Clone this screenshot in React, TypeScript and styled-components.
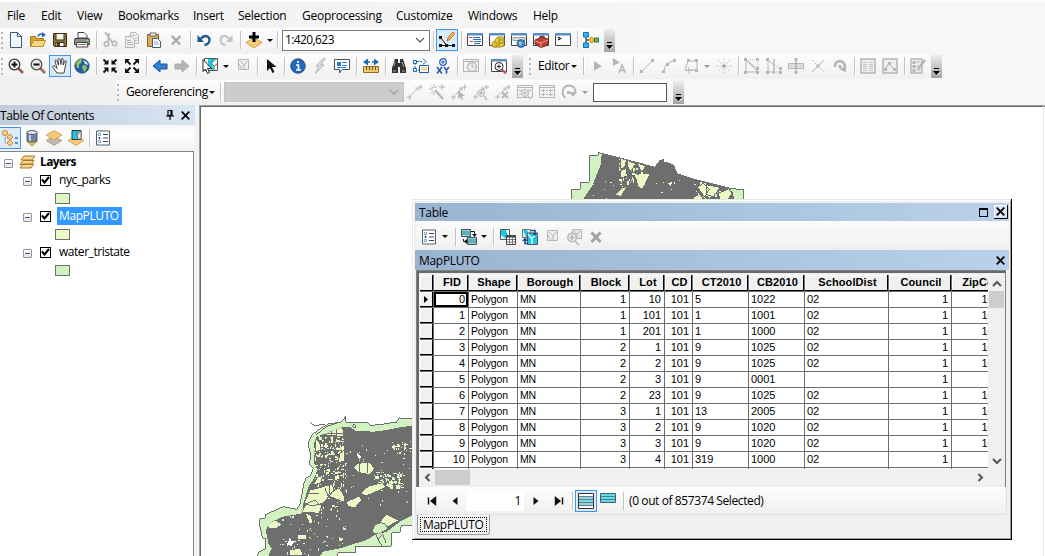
import React from 'react';
import styled, { createGlobalStyle } from 'styled-components';

const Global = createGlobalStyle`
  *{box-sizing:border-box}
  body{margin:0;background:#f0f0f0;overflow:hidden;color:#000;font:12px/16px "Open Sans","Noto Sans",sans-serif;letter-spacing:-.25px}
  svg{display:block;flex:none}
`;

const OFF = '#b6b6b6';
const DARK = '#3c4350';
const BLUE = '#2463b4';

const Screen = styled.div`width:1045px;height:556px;display:flex;flex-direction:column;background:linear-gradient(90deg,#f0f0f0,#f7f7f7 65%);overflow:hidden`;
const MenuBar = styled.nav`height:27px;border-top:2px solid #fff;display:flex;align-items:center;padding:2px 0 0 7px;flex:none`;
const MenuItem = styled.span<{ $w: number }>`width:${p => p.$w}px;white-space:nowrap;flex:none`;
const ToolRow = styled.div<{ $left?: number }>`height:26px;display:flex;align-items:center;flex:none;padding-left:${p => p.$left || 0}px`;
const Strip = styled.div`height:25px;display:flex;align-items:center;background:linear-gradient(#fdfdfd,#f0f0f0)`;
const Slot = styled.span<{ $w?: number; $on?: boolean }>`
  width:${p => p.$w || 22}px;height:22px;display:flex;align-items:center;justify-content:center;flex:none;
  ${p => p.$on && 'border:1px solid #3c96f0;background:#dcebfa;'}
`;
const Sep = styled.i<{ $w?: number }>`
  width:${p => p.$w || 6}px;height:18px;flex:none;display:flex;justify-content:center;
  &::after{content:'';width:1px;background:#c3c3c3;box-shadow:1px 0 #fff}
`;
const Grip = styled.i`width:5px;height:17px;flex:none;background:repeating-linear-gradient(#b8b8b8 0 2px,transparent 2px 5px) 1px 0/2px 100% no-repeat`;
const Space = styled.i<{ $w: number }>`width:${p => p.$w}px;flex:none`;
const Caret = styled.i<{ $w?: number; $off?: boolean }>`
  width:${p => p.$w || 9}px;flex:none;display:flex;justify-content:center;
  &::after{content:'';border:3px solid transparent;border-top-color:${p => (p.$off ? '#999' : '#111')};border-bottom:0}
`;
const More = styled.span`width:11px;height:23px;margin-left:2px;flex:none;background:linear-gradient(#eee,#a2a2a2);display:flex;align-items:flex-end;justify-content:center;padding-bottom:2px`;
const Field = styled.span<{ $w: number; $off?: boolean }>`
  width:${p => p.$w}px;height:${p => (p.$off ? 20 : 21)}px;flex:none;display:flex;align-items:center;justify-content:space-between;padding:0 4px 0 2px;
  background:${p => (p.$off ? '#ccc' : '#fff')};border:1px solid ${p => (p.$off ? '#c4c4c4' : '#7a7a7a')};letter-spacing:-.6px;
`;
const Blank = styled.span`width:74px;height:19px;background:#fff;border:1px solid #555;flex:none`;
const BarLabel = styled.span<{ $w: number }>`width:${p => p.$w}px;padding:0 0 0 5px;display:flex;align-items:center;white-space:nowrap;flex:none;letter-spacing:-.35px`;

const win = (inner: React.ReactNode) => (
  <><path d="M.5 1.500h15v12H.5z" fill="#fff" stroke={DARK} /><path d="M0 1h16v2.500H0z" fill="#5b8fc4" />{inner}</>
);
const winOff = (inner: React.ReactNode) => (
  <><path d="M.5 1.500h15v12H.5z" fill="#f4f4f4" stroke={OFF} /><path d="M1 3.500h14" stroke={OFF} />{inner}</>
);
const nodes = (pts: number[][], c = OFF) => pts.map(([x, y], i) => <path key={i} d={`M${x} ${y}h3v3h-3z`} fill={c} />);
const lens = (c: string, glass: string, handle: string, sign: string) => (
  <><path d="M10 10l5 5" stroke={handle} strokeWidth="2.600" /><circle cx="6.500" cy="6.500" r="5.300" fill={glass} stroke={c} strokeWidth="1.300" /><path d={sign} stroke="#111" strokeWidth="2" /></>
);
const linkBase = <path d="M0 13h5M2.500 10.500v5M11 3h5M13.500 .5v5M4 11l7-7M8 4h3v3" stroke={OFF} fill="none" />;
const diamond = (y: number, f: string) => <path d={`M8 ${y}l8 4.500-8 5-8-5z`} fill={f} stroke="#b9862e" strokeWidth=".6" />;

const ICONS: Record<string, React.ReactNode> = {
  page: <path d="M2.500 .5h7l4 4v11h-11zM9.500 .5v4h4" fill="#f3f8fd" stroke="#455872" />,
  open: <><path d="M.5 14V4.500h5l1 2h7V14z" fill="#d9a62d" stroke="#a87b20" /><path d="M.5 14.500l3-6h12l-2.500 6z" fill="#f8d878" stroke="#b48a30" /><path d="M8 4.500c1-3 3-3 5-2" stroke={BLUE} strokeWidth="1.500" fill="none" /><path d="M12 0l4 3-4 2.500z" fill={BLUE} /></>,
  save: <><path d="M1.500 1.500h13v13h-12l-1-1z" fill="#8b7635" stroke="#3b351f" /><path d="M4 1.500h8V8H4z" fill="#f4f1e6" stroke="#3b351f" /><path d="M4 10.500h8v4H4z" fill="#fff" stroke="#3b351f" /><path d="M5 11h3v3H5z" fill="#4b431f" /></>,
  print: <><path d="M4 6V.5h6l3 3V6z" fill="#fff" stroke="#444" /><path d="M1 6.500h14l1 2v4H.5v-4z" fill="#8b8d85" stroke="#3f3f3f" /><path d="M3 10.500h10l1 4.500H2z" fill="#fff" stroke="#444" /><path d="M4 12.500h8" stroke="#777" /><path d="M12 8.500h2" stroke="#5f5" /></>,
  cut: <><path d="M3 0l7 10M7 1L6 10" stroke={OFF} strokeWidth="1.800" /><circle cx="4.500" cy="12" r="2.200" fill="none" stroke={OFF} strokeWidth="1.600" /><circle cx="12.500" cy="11.500" r="2.200" fill="none" stroke={OFF} strokeWidth="1.600" /></>,
  copy: <><path d="M6.500 .5h5l3 3v8h-8z" fill="#eee" stroke={OFF} /><path d="M1.500 4.500h6l3 3v8h-9z" fill="#eee" stroke={OFF} /><path d="M3 8.500h4M3 10.500h6M3 12.500h6M8 3.500h3M11 6.500h2M11 8.500h2" stroke={OFF} /></>,
  paste: <><path d="M1.500 2.500h11v12h-11z" fill="#dfae55" stroke="#87612d" /><path d="M4 1h6v3H4z" fill="#f3f3ed" stroke="#666" /><path d="M6.500 6.500h5l3 3v6h-8z" fill="#fff" stroke="#425c7c" /><path d="M8 10h4M8 12h5" stroke="#8ba7c7" /></>,
  del: <path d="M4 4l8 8.500M12.500 4L4 12.500" stroke="#a8a8a8" strokeWidth="2.400" />,
  undo: <><path d="M8.500 13c6-1 6-7 3-8.500-3-1.500-5 0-7 2.500" fill="none" stroke="#1c568f" strokeWidth="2.300" /><path d="M1.500 3v7H8z" fill="#1c568f" /></>,
  redo: <><path d="M7.500 13c-6-1-6-7-3-8.500 3-1.500 5 0 7 2.500" fill="none" stroke="#c2c2c2" strokeWidth="2" /><path d="M14.500 3v7H8z" fill="#c2c2c2" /></>,
  add: <><path d="M8 6l8 4.500L8 16 0 10.500z" fill="#f6cd7d" stroke="#d89b38" /><path d="M8 0v10M3 5h10" stroke="#000" strokeWidth="3" /></>,
  edit: <><path d="M1.500 5.500l6 7.500M2 13.500h12" fill="none" stroke="#111" />{nodes([[0, 4], [0, 12], [6, 12], [13, 12]], '#111')}<path d="M8 9l1-3.500 5-6 2 2-5 6z" fill="#f4b54b" stroke="#b2482c" strokeWidth=".7" /></>,
  toc: win(<><path d="M2 5.500h3M3 9.500h3" stroke="#e83f24" /><path d="M6 5.500h7M6 7.500h8M7 9.500h7M7 11.500h6" stroke="#2275ce" /></>),
  catalog: win(<><path d="M6 8l3-3h5l1 2v7l-4 1H6z" fill="#f0d040" stroke="#9b831d" /><path d="M10 6v8M11 8h3M11 11h3" stroke="#856e20" /><circle cx="5.500" cy="12.500" r="2.800" fill="#e3c02b" stroke="#8c7619" strokeWidth=".7" /></>),
  search: win(<><path d="M2 5.500h12v3H2z" fill="#e2e2e2" stroke="#999" /><circle cx="10" cy="11.500" r="4" fill="#3e8ed5" stroke="#236" strokeWidth=".6" /><path d="M8 9.500l3 1-1 3-2-1z" fill="#a8dc8b" /></>),
  toolbox: win(<><path d="M2 8l7-3 6 2v6l-7 2.500L2 12z" fill="#c33e35" stroke="#762720" /><path d="M2 9l6 2 7-3M8 11v4" stroke="#f0a090" fill="none" /><path d="M7 6V4.500l4-.5v2" stroke="#333" fill="none" /></>),
  python: win(<path d="M3 5l2.500 1.500L3 8" stroke="#111" fill="none" strokeWidth="1.300" />),
  model: <><path d="M3 3v10M3 8h9" stroke="#111" /><path d="M.5 .5h5v4.500h-5zM.5 11h5v4.500h-5z" fill="#2db9ef" stroke="#1770af" /><path d="M5.500 8l3-3 3 3-3 3z" fill="#f4cd3c" stroke="#9b7415" /><path d="M11.500 6h4v4h-4z" fill="#6cc853" stroke="#2d7422" /></>,
  zin: lens('#333', '#fff', '#a05a52', 'M3.500 6.500h6M6.500 3.500v6'),
  zout: lens('#555', '#e8e8ea', '#a86a60', 'M3.500 6.500h6'),
  hand: <path d="M5 15L1 9.500c-1-2 1-2 2-1l2 2L3 3c0-1.500 1.500-1 2 0l1.500 4L6 1.500c0-1.500 1.500-1.500 2 0L9 6.500 9.500 1c.5-1 1.500-1 1.700.5V7l1.500-4c.7-1 1.800-.5 1.500.5L13 10l-1 5z" fill="#fff" stroke="#333" strokeWidth=".9" />,
  globe: <><circle cx="8" cy="8" r="7.200" fill="#2461a4" stroke="#294777" strokeWidth=".8" /><path d="M2 5c1-2 3-4 6-4l-1 4-2 2 0 3-2 0zM8 8l3-1 2 2-2 5-2-2z" fill="#8fc25a" /><path d="M9 2l4 2 1 3-3-1z" fill="#d5e9f3" /></>,
  shrink: <><path d="M1.500 1.500l4 4M14.500 1.500l-4 4M1.500 14.500l4-4M14.500 14.500l-4-4" stroke="#111" strokeWidth="2" /><path d="M6.500 1.500v5h-5zM9.500 1.500v5h5zM6.500 14.500v-5h-5zM9.500 14.500v-5h5z" fill="#111" /></>,
  grow: <><path d="M2 2l4.500 4.500M14 2L9.500 6.500M2 14l4.500-4.500M14 14L9.500 9.500" stroke="#111" strokeWidth="1.800" /><path d="M1 1h5L1 6zM15 1h-5l5 5zM1 15h5l-5-5zM15 15h-5l5-5z" fill="#111" /></>,
  back: <path d="M1 8l7-6v4h7v5H8v3z" fill="#347ed0" stroke="#1b519b" />,
  fwd: <path d="M15 8L8 2v4H1v5h7v3z" fill={OFF} stroke="#aaa" />,
  select: <><path d="M2.500 .5h13v12h-13z" fill="#f4f4f4" stroke="#555" /><path d="M6 1h9L10 5l2 7H9L6 7z" fill="#19cdec" /><path d="M11 1l-2 4 3 3 3-2M12 8v4" stroke="#777" fill="none" /><path d="M1 1.500v12l2.500-2.500 2 4.500 2-1-2-4h4z" fill="#fff" stroke="#111" strokeWidth=".9" /></>,
  clear: <><path d="M3.500 1.500h10v10h-10z" fill="#eee" stroke={OFF} /><path d="M5 3l4 4v4M9 7l3.500-4M4 6l3 5" fill="none" stroke={OFF} /></>,
  pointer: <path d="M4 1v12l3-3 2.500 5 2-1L9 9h4.500z" fill="#111" />,
  info: <><circle cx="8" cy="8" r="7.300" fill="#2366bd" stroke="#174586" strokeWidth=".8" /><path d="M8 3v2M6 7h2.500v5M6 12h5" fill="none" stroke="#fff" strokeWidth="1.700" /></>,
  bolt: <path d="M11 .5L4 8h3l-4 7.500L12 7H8.500l5-6.500z" fill="#ddd" stroke={OFF} />,
  html: <><path d="M.5 1.500h15v10H8L5.500 15v-3.500h-5z" fill="#fff" stroke="#43505e" /><path d="M3 4h4v4H3z" fill="#2b7ec9" /><path d="M8 4.500h5M8 7.500h5M3 9.500h9" stroke="#2b7ec9" /></>,
  measure: <><path d="M.5 8.500h15v6H.5z" fill="#f0c771" stroke="#93691e" /><path d="M3.500 9v3M6.500 9v3M9.500 9v3M12.500 9v3" stroke="#70501d" /><path d="M3 4h4M9 4h4" stroke="#176cb9" strokeWidth="1.500" /><path d="M0 4l5-3.500v7zM16 4l-5-3.500v7z" fill="#176cb9" /></>,
  find: <><path d="M4 1h3v4h2V1h3l3 9v5H9V9H7v6H1v-5z" fill="#333" /><path d="M3 8l1-4M11 4l2 5M2 13h3M11 13h3" stroke="#aaa" /></>,
  route: <><path d="M6.500 7.500h9v7h-9z" fill="#fff" stroke="#175f9e" /><path d="M2 5v5M4 3.500h7M2 12h4" fill="none" stroke="#175f9e" strokeDasharray="2 1" /><path d="M.5 10.500h3v3h-3zM.5 2.500h3v3h-3zM10 .5l3 3-3 3" fill="#e9f3fa" stroke="#1b6aa9" /><path d="M8 10h6M8 12h6" stroke="#e5b462" /></>,
  xy: <><circle cx="8" cy="4" r="3.300" fill="#fff" stroke={BLUE} strokeWidth="1.300" /><path d="M8 2v4M6 4h4" stroke={BLUE} /><path d="M2 9l5 6.500M7 9l-5 6.500M9 9l2.500 3L14 9M11.500 12v3.500" stroke={BLUE} strokeWidth="1.700" fill="none" /></>,
  time: winOff(<><circle cx="9" cy="9" r="4.500" fill="#eee" stroke={OFF} strokeWidth="1.300" /><path d="M9 6v3h2.500" stroke={OFF} fill="none" /></>),
  viewer: win(<><circle cx="8" cy="8.500" r="4" fill="#fff" stroke="#222" /><path d="M8 6.500v4M6 8.500h4" stroke="#222" /><path d="M11 11.500l4 4" stroke="#a65d55" strokeWidth="2.200" /></>),
  etool: <path d="M5 3l8 5.500-8 4z" fill={OFF} />,
  etoolA: <><path d="M2 0l7 4.500-7 3.500z" fill={OFF} /><path d="M8 15l3-8 3.500 8M9 12.500h4.500" stroke={OFF} fill="none" strokeWidth="1.500" /></>,
  line: <><path d="M3 13L13 3" stroke={OFF} />{nodes([[1, 12], [12, 1]])}</>,
  arc: <><path d="M3 13Q4 4 13 3" stroke={OFF} fill="none" />{nodes([[1, 12], [5, 5], [12, 1]])}</>,
  trap: <><path d="M5 3h9v9H2z" stroke={OFF} fill="none" />{nodes([[4, 1], [12, 1], [12, 11]])}<path d="M6 9v7M3 12.500h7" stroke={OFF} /></>,
  star: <><path d="M8 0v16M0 8h16M2 2l12 12M14 2L2 14" stroke="#c6c6c6" strokeDasharray="2 1.500" /><path d="M6.500 6.500h3v3h-3z" fill="#999" /></>,
  reshape: <><path d="M2 2v12h12zM2 2l12 9" stroke={OFF} fill="none" /><path d="M4 2h10v9" stroke={OFF} fill="none" strokeDasharray="1 1" />{nodes([[0, 0], [12, 0], [12, 9], [0, 13], [12, 13]])}</>,
  cutpoly: <><path d="M2 2v12h6M2 2l6 5" stroke={OFF} fill="none" /><path d="M8 1v15" stroke="#999" /><path d="M8 7l6 3v4H8" stroke={OFF} fill="none" strokeDasharray="1 1" />{nodes([[0, 0], [0, 13], [13, 9], [13, 13]])}</>,
  split: <><path d="M.5 5.500h15v5H.5z" fill="#ddd" stroke={OFF} /><path d="M8 0v16" stroke="#999" />{nodes([[6.500, 0], [6.500, 13]])}</>,
  cross: <><path d="M2 14L14 2" stroke={OFF} /><path d="M2 2l12 12" stroke={OFF} strokeDasharray="2 2" />{nodes([[6.500, 6.500]])}</>,
  rotate: <><path d="M3 9c-1-8 11-8 10 1l-2 3" fill="none" stroke={OFF} strokeWidth="2.600" /><path d="M7 11l7 3V8z" fill={OFF} />{nodes([[6.500, 7]])}</>,
  attrs: <><path d="M1 1h14v14H1z" fill="#eee" stroke={OFF} strokeWidth="1.500" /><path d="M3 4.500h4M9 4.500h4M3 6.500h4M9 6.500h4M3 8.500h4M9 8.500h4M3 10.500h4M9 10.500h4M3 12.500h4M9 12.500h4" stroke="#c4c4c4" /></>,
  sketch: <><path d="M1 1h14v14H1z" fill="#eee" stroke={OFF} strokeWidth="1.500" /><path d="M3 12l4-7 5 7" stroke={OFF} fill="none" />{nodes([[2, 10], [6, 4], [11, 10]])}</>,
  create: <><path d="M1 1h11v14H1z" fill="#eee" stroke={OFF} strokeWidth="1.400" /><path d="M6 4h4M6 8h3M6 12h5" stroke={OFF} />{nodes([[2.500, 3], [2.500, 7], [2.500, 11]])}<path d="M8 11l7-9" stroke={OFF} strokeWidth="2.500" /></>,
  link: linkBase,
  linkWand: <><path d="M6 6l8 9" stroke={OFF} strokeWidth="2.200" /><path d="M5 0v4M0 5h4M2 2l2 2M8 2L6 4M2 9l2-2M5 8v3M10 3h6M13 0v6" stroke={OFF} /></>,
  linkSel: <>{linkBase}<path d="M7 6v9l2-2 2 3 1-1-1-3h3z" fill={OFF} /></>,
  linkZoom: <>{linkBase}<circle cx="8" cy="9" r="3.500" fill="#eee" stroke={OFF} /><path d="M8 7v4M6 9h4M11 12l3 4" stroke={OFF} strokeWidth="1.300" /></>,
  linkDel: <>{linkBase}<path d="M7 8l6 6M13 8l-6 6" stroke={OFF} strokeWidth="2" /></>,
  viewLink: winOff(<><path d="M2 6.500h3M11 6.500h3M2 10.500h2" stroke={OFF} /><circle cx="8" cy="9" r="3.500" fill="#eee" stroke={OFF} /><path d="M8 7v4M6 9h4M11 12l3 3" stroke={OFF} /></>),
  table: winOff(<path d="M2 6.500h4M10 6.500h4M2 10.500h4M10 10.500h4M4.500 5v3M11.500 5v3M4.500 9v3M11.500 9v3M7 6.500h2M7 10.500h2" stroke={OFF} />),
  turn: <><path d="M4.500 13.500C0 11 1 2 7.500 1.500c6 0 8 5 6 8" fill="none" stroke={OFF} strokeWidth="1.900" /><path d="M8 8h8l-4 5z" fill={OFF} />{nodes([[6, 7]])}</>,
  listOrder: <><path d="M3 5v8h5M3 8h5" fill="none" stroke="#777" strokeDasharray="1 1" /><circle cx="3" cy="3" r="2.700" fill="#f5d085" stroke="#c88d32" /><path d="M8 4l3 3-3 3-3-3zM8 10l3 3-3 3-3-3z" fill="#f5d085" stroke="#c88d32" /><path d="M13 8h3M13 13h3" stroke="#3275b7" strokeWidth="1.500" /></>,
  listSource: <><path d="M2.500 11h11L8 16z" fill="#f3c76d" stroke="#b9862e" /><path d="M3 2v8c2 3 8 3 10 0V2z" fill="#73829d" stroke="#4c5b73" /><ellipse cx="8" cy="2.500" rx="5" ry="2" fill="#dce6f2" stroke="#4c5b73" /><path d="M6 5v6" stroke="#c3d0df" strokeWidth="2" /></>,
  listVis: <>{diamond(6, '#b8b8b8')}{diamond(.5, '#f6c978')}</>,
  listSel: <>{diamond(6, '#f6c978')}<path d="M4 .5h9v9H4z" fill="#20cae8" stroke="#333" /><path d="M8 1l1 4 1 4M9 5l4-4v8h-3z" stroke="#777" fill="#eee" /></>,
  options: <><path d="M1.500 1h13v14h-13z" fill="#fff" stroke="#506070" /><path d="M8 4.500h5M8 8h5M8 11.500h5" stroke="#33445a" /><circle cx="4.500" cy="4.500" r="1.200" fill="none" stroke="#4d80b4" /><circle cx="4.500" cy="8" r="1" fill="#345" /><circle cx="4.500" cy="11.500" r="1.200" fill="none" stroke="#4d80b4" /></>,
  related: <><path d="M.5 .5h9v7h-9zM6.500 8.500h9v7h-9z" fill="#8ed2df" stroke="#405563" /><path d="M1 3h8M1 5h8M7 11h8M7 13h8" stroke="#4d7e8b" /><path d="M10 2.500h3.500V6M5 12.500H2.500V10" fill="none" stroke="#111" /><path d="M11 5h5l-2.500 3zM6 10v5l-3-2.500z" fill="#111" /></>,
  selAttr: <><path d="M.5 .5h9v10h-9z" fill="#fff" stroke="#555" /><path d="M1 1h5l3 9H6L1 6z" fill="#19c7e8" /><path d="M6.500 6.500h9v9h-9z" fill="#fff" stroke="#444" /><path d="M6 7.500h10" stroke="#444" strokeWidth="2" /><path d="M7 10.500h8M7 13h8M9.500 8v7M12.500 8v7" stroke="#777" /></>,
  swap: <><path d="M.5 .5h8v8h-8z" fill="#eee" stroke="#777" /><path d="M1 1h4l3 7H4z" fill="#19c7e8" /><path d="M5.500 4h10v11.500h-10z" fill="#19c7e8" stroke="#555" /><path d="M6 5l4 5v5M10 9l5-4" stroke="#e6fbff" strokeWidth="1.500" fill="none" /><path d="M9 1.500h4V4M6 14.500H3V12" fill="none" stroke="#174f91" strokeWidth="1.600" /><path d="M10 4h6l-3 3zM0 12h6L3 8.500z" fill="#174f91" /></>,
  zoomSel: <><path d="M6.500 .5h9v9h-9z" fill="#e6e6e6" stroke={OFF} /><path d="M8 2l3 3v5M11 5l3-3" fill="none" stroke={OFF} /><circle cx="6" cy="8.500" r="4.200" fill="#eee" stroke={OFF} strokeWidth="1.400" /><path d="M6 6v5M3.500 8.500h5M9 12l4 4" stroke={OFF} strokeWidth="1.600" /></>,
  delBig: <path d="M3.500 3.500l9 9.500M12.500 3.500l-9 9.500" stroke="#a2a2a2" strokeWidth="3" />,
  layers: <path d="M1 14l3-4h11l-3 4zM1 10.500l3-4h11l-3 4zM2 6l3-4h11l-3 4z" fill="#f7d58e" stroke="#a8792a" />,
  first: <path d="M4 4v8M12 4L7 8l5 4z" fill="#111" stroke="#111" strokeWidth="1.700" />,
  prev: <path d="M10.500 4l-5 4 5 4z" fill="#111" />,
  next: <path d="M5.500 4l5 4-5 4z" fill="#111" />,
  last: <path d="M12 4v8M4 4l5 4-5 4z" fill="#111" stroke="#111" strokeWidth="1.700" />,
  allRows: <><path d="M.5 .5h15v15H.5z" fill="#fff" stroke="#333" /><path d="M1 5h14M1 8h14M1 11h14" stroke="#7fdbe6" strokeWidth="2" /><path d="M1 3.500h14M1 6.500h14M1 9.500h14M1 12.500h14" stroke="#555" strokeWidth=".8" /></>,
  selRows: <><path d="M.5 .5h15v9H.5z" fill="#68d8e5" stroke="#426170" /><path d="M1 3.500h14M1 6.500h14" stroke="#3b8794" /></>,
};

const Icon = ({ n, s = 16 }: { n: string; s?: number }) => <svg width={s} height={s} viewBox="0 0 16 16">{ICONS[n]}</svg>;
const Tools = ({ names }: { names: string }) => <>{names.split(' ').map(n => <Slot key={n}><Icon n={n} /></Slot>)}</>;
const Overflow = () => <More><svg width="7" height="9" viewBox="0 0 7 9"><path d="M1 1.500h5" stroke="#000" /><path d="M0 4h7L3.500 8z" fill="#000" /><path d="M4 8.500l3-3" stroke="#fff" /></svg></More>;
const Chevron = ({ c = '#555', d = 'M1 1l4 4 4-4', w = 1.1 }) => <svg width="10" height="7" viewBox="0 0 10 7"><path d={d} fill="none" stroke={c} strokeWidth={w} /></svg>;
const Cross = () => <svg width="9" height="9" viewBox="0 0 9 9"><path d="M.7.7l7.600 7.600M8.300.7L.7 8.300" stroke="#000" strokeWidth="1.700" /></svg>;

const Main = styled.main`flex:1;display:flex;min-height:0`;
const Toc = styled.aside`width:195px;display:flex;flex-direction:column;flex:none`;
const TocHead = styled.header`height:20px;background:linear-gradient(90deg,#c2cddb,#d8e5f4);display:flex;align-items:center;padding-right:5px;gap:7px;letter-spacing:-.38px;& span{flex:1;padding-top:2px}`;
const TocTools = styled.div`height:26px;display:flex;align-items:center;background:linear-gradient(#f6f6f6,#fff 40%,#f0f0f0);margin-left:-1px`;
const Tree = styled.div`flex:1;width:194px;background:#fff;border:solid #858585;border-width:1px 1px 0 0;padding-top:1px`;
const Node = styled.div<{ $in?: number }>`height:18px;padding-left:${p => p.$in || 4}px;display:flex;align-items:center`;
const Minus = styled.i`width:9px;height:9px;margin-top:2px;border:1px solid #989898;border-radius:1px;background:linear-gradient(#fff,#e4e4e4);display:flex;align-items:center;justify-content:center;&::after{content:'';width:5px;height:1px;background:#3a5794}`;
const Check = styled.i`width:11px;height:11px;border:1px solid #000;background:#fff;margin:0 6px 0 8px;display:flex;align-items:center;justify-content:center`;
const Name = styled.span<{ $sel?: boolean }>`height:18px;line-height:18px;padding:0 2px;letter-spacing:-.46px;${p => p.$sel && 'background:#3399ff;color:#fff;letter-spacing:-.4px;padding-right:3px;'}`;
const Root = styled.b`margin-left:5px;letter-spacing:-.6px`;
const Swatch = styled.i<{ $c: string }>`width:15px;height:11px;border:1px solid #6e6e6e;background:${p => p.$c}`;

const MapFrame = styled.section`flex:1;margin-left:4px;border:solid #a0a0a0;border-width:1px 0 0 1px;box-shadow:inset 1px 1px #696969;background:#fff;position:relative;overflow:hidden;&>svg{position:absolute;left:0;top:0}`;

const LAND = '#6e6e6e', PARK = '#d3f2c2', LOTC = '#ebf9c7';
const speckle = (seed: number, count: number, x0: number, y0: number, w: number, h: number, max: number) => {
  let s = seed * 7919;
  const rnd = () => ((s = (s * 16807) % 2147483647) / 2147483647);
  return Array.from({ length: count }, (_, i) => {
    const x = Math.round((x0 + rnd() * w) / 3) * 3, y = Math.round((y0 + rnd() * h) / 3) * 3;
    const a = 3 * (1 + Math.floor(rnd() * rnd() * max)), b = 3 * (1 + Math.floor(rnd() * rnd() * max));
    return <path key={seed + '-' + i} d={`M${x} ${y}h${a}v${b}h-${a}z`} fill={rnd() > 0.3 ? LOTC : PARK} />;
  });
};

const SOUTH_LAND = '85,468 95,445 85,430 80,405 78,388 95,365 130,350 187,340 190,312 205,262 225,230 232,210 222,190 222,130 230,110 270,95 310,80 330,80 345,92 400,95 440,90 480,82 520,76 520,345 480,365 440,395 405,405 380,420 300,445 250,455 240,468';
const NORTH_LAND = '68,180 98,135 122,75 125,42 165,50 285,82 297,65 303,60 312,66 340,74 352,102 410,120 515,146 524,180';

const CityMap = () => (
  <svg width="844" height="450" viewBox="200 106 844 450" shapeRendering="crispEdges">
    <g transform="translate(240 400) scale(.33333)" strokeWidth="3">
      <clipPath id="south"><polygon points={SOUTH_LAND} /></clipPath>
      <polygon fill={PARK} stroke={LAND} points="46,475 58,455 78,445 78,415 68,415 62,390 58,372 60,356 76,354 76,344 130,320 170,328 180,312 192,250 198,234 210,228 220,206 208,194 212,165 204,130 216,104 240,86 265,72 304,66 318,48 318,66 384,68 390,76 420,74 470,66 478,54 525,57 525,375 484,377 480,396 455,398 455,438 346,440 346,458 293,458 293,475" />
      <path d="M210 68l18 10 18-6 10 2M228 105l32-26 36-12" fill="none" stroke={LAND} />
      <polygon fill={LAND} points={SOUTH_LAND} />
      <g clipPath="url(#south)">
        {speckle(31, 170, 222, 105, 95, 150, 4)}
        {speckle(53, 50, 200, 250, 120, 90, 3)}
        {speckle(77, 60, 110, 345, 210, 120, 3)}
        {speckle(99, 40, 330, 130, 190, 200, 2)}
        {speckle(45, 80, 400, 215, 90, 45, 4)}
        {speckle(21, 30, 455, 120, 60, 40, 3)}
        <g fill={LOTC} stroke={LAND}>
          <path d="M225 115l14 12 4 22-16 8zM245 105l25-18 38-6 4 30-50-6zM210 270l24-6 44-12 2 20-30 38-34 8-24-8zM225 300l20 18-8 22-50-4 10-24zM262 285l36-22 16 28v16l-46-18zM298 160l20-12-2 34-20 6zM232 232l16-6-6 24-22 4zM318 306l40-18 8 12-22 24-20-6z" />
          <path d="M340 202l14-12 34-4 16 20-14 18-34-6zM362 280l24-22 42-10 10 14-60 26zM402 385l38-42 36 18-34 20-34 36zM196 340l16 4 8 24-12 4zM83 372l22-12 22 14-20 12H86zM148 448l34-2 8 22h-40zM172 404h28l-2 14h-26z" />
        </g>
        <path d="M400 385c8-24 42-20 42 2l-26 16-20-6z" fill={PARK} stroke={LAND} />
        <path d="M358 190v28M384 190v30M255 265l12 30M206 282h30M290 84v24M276 88v22M250 220v-30M315 90v230M262 100h48M270 250v28" stroke={LAND} fill="none" />
        <path d="M150 412l4 10 14 2-10 6-2 10-8-6-8 4 4-12zM350 158l14 14-5 6-8-12zM486 178h10v-6M228 406h10M470 232l6-10 4 16z" fill="#fff" />
      </g>
      <path d="M408 404l6 12 14-12 10 24M414 418l12 20" fill="none" stroke={LAND} />
      <path d="M340 72l8 4v8l-10-2z" fill={PARK} stroke={LAND} />
    </g>
    <g transform="translate(560 140) scale(.33333)" strokeWidth="3">
      <clipPath id="north"><polygon points={NORTH_LAND} /></clipPath>
      <polygon fill={PARK} stroke={LAND} points="34,190 34,149 61,148 61,128 88,126 88,46 115,46 115,38 165,50 285,82 297,65 303,60 312,66 340,74 352,102 410,120 515,146 552,149 552,190" />
      <polygon fill={LAND} points={NORTH_LAND} />
      <g clipPath="url(#north)">
        {speckle(17, 60, 175, 56, 78, 75, 4)}
        {speckle(64, 60, 400, 125, 115, 55, 4)}
        {speckle(28, 18, 90, 120, 270, 58, 2)}
        <g fill={LOTC}>
          <path d="M226 104l42-2-22 44-10-6z" />
          <path stroke={LAND} d="M180 54l20 6-6 22-12 4zM204 62l24 10-16 20-10-12zM180 92l18-6 4 22-20 6zM232 70l26 8-14 18zM412 142l18-12 18 18-14 22zM440 134l40 8-20 28-20-6zM476 160l30-14 10 16-18 22-20-6z" />
          <path d="M168 164l18-20 12-2-16 26zM322 130l14-4-4 14zM402 172l18-8 10 18h-28z" />
        </g>
      </g>
      <path d="M297 62l14-3 1 6" fill="none" stroke={LAND} />
    </g>
    <path d="M1043.500 106v450" stroke="#e8e8e8" />
  </svg>
);

const Window = styled.section`
  position:absolute;left:212px;top:93px;width:600px;height:341px;background:#f0f0f0;border:solid #000;border-width:0 1px 1px 0;
  box-shadow:inset 1px 1px #e8e8e8,inset 2px 2px #fff,inset -1px -1px #a0a0a0;padding:4px 2px 3px 3px;display:flex;flex-direction:column;
`;
const Title = styled.header<{ $h: number }>`height:${p => p.$h}px;flex:none;background:linear-gradient(90deg,#99b4d1,#b9d1ea);display:flex;align-items:center;padding:0 2px 0 4px;letter-spacing:-.3px;& span{flex:1;padding-top:2px}`;
const CapBtn = styled.i<{ $box?: boolean }>`width:14px;height:14px;margin-left:2px;display:flex;align-items:center;justify-content:center;${p => p.$box && 'background:#d7e4f2;border:solid #000;border-width:0 1px 1px 0;box-shadow:inset 1px 1px #fff;margin-right:-1px;'}`;
const MaxBox = styled.i`width:9px;height:9px;border:1px solid #000;border-top-width:2px`;
const WinTools = styled.div`height:29px;flex:none;display:flex;align-items:center;background:linear-gradient(#fcfcfc,#efefef);padding:2px 0 0 3px;margin-left:1px`;
const GridFrame = styled.div`height:217px;flex:none;margin:0 3px 0 1px;border:solid #808080;border-width:1px 1px 0 1px;box-shadow:inset 2px 2px #696969;padding:4px 0 0 3px;display:flex;flex-direction:column;background:#f0f0f0`;
const GridBody = styled.div`height:194px;display:flex;overflow:hidden;flex:none`;
const Sheet = styled.div`width:568px;background:#fff;overflow:hidden;font:11px/15px "Liberation Sans",Arial,sans-serif;letter-spacing:0`;
const Row = styled.div<{ $head?: boolean }>`display:grid;grid-template-columns:14px 35px 49px 63px 49px 35px 28px 56px 56px 84px 63px 64px;height:${p => (p.$head ? 17 : 16)}px;width:596px`;
const Head = styled.b`background:#f0f0f0;border:solid #6d6d6d;border-width:0 1px 1px 0;box-shadow:inset -1px -1px #000,inset 1px 1px #fff;text-align:center;line-height:14px;padding-left:2px;white-space:nowrap;overflow:hidden;letter-spacing:.1px`;
const Cell = styled.span<{ $r?: boolean; $t?: boolean; $focus?: boolean }>`
  border:solid #6d6d6d;border-width:0 1px 1px 0;padding:0 ${p => (p.$r ? 3 : 2)}px;text-align:${p => (p.$r ? 'right' : 'left')};overflow:hidden;white-space:nowrap;line-height:14px;
  ${p => p.$t && 'font-size:10.5px;letter-spacing:-.15px;'}
  ${p => p.$focus && 'box-shadow:inset 0 0 0 2px #000;'}
`;
const RowHead = styled.i`background:#f0f0f0;border:solid #6d6d6d;border-width:0 1px 1px 0;box-shadow:inset -1px -1px #000,inset 1px 1px #fff;display:flex;align-items:center;justify-content:center`;
const VScroll = styled.div`width:17px;background:#f0f0f0;display:flex;flex-direction:column;align-items:center;justify-content:space-between;padding:5px 0 4px`;
const VThumb = styled.i`width:15px;height:17px;background:#cdcdcd;margin:4px 0 auto`;
const HScroll = styled.div`height:17px;display:flex;align-items:center;justify-content:space-between;padding-right:21px;flex:none`;
const HThumb = styled.i`width:35px;height:15px;background:#cdcdcd;margin-right:auto`;
const Nav = styled.div`height:28px;flex:none;display:flex;align-items:center;background:linear-gradient(#fdfdfd,#f0f0f0);margin-right:2px;border:1px solid #e0e0e0;border-top-color:#fff;padding-left:4px;letter-spacing:-.4px`;
const RecNo = styled.span`width:58px;height:20px;background:#fff;text-align:right;padding-right:3px;line-height:20px`;
const TabRow = styled.div`padding-left:2px;display:flex`;
const Tab = styled.div`height:20px;border:1px solid #999;border-top:0;border-radius:0 0 3px 3px;padding:2px 2px;background:#f4f4f4;& span{display:block;width:67px;height:15px;line-height:16px;outline:1px dotted #000;outline-offset:-1px;padding-left:3px;letter-spacing:-.3px}`;

const COLS = ['FID', 'Shape', 'Borough', 'Block', 'Lot', 'CD', 'CT2010', 'CB2010', 'SchoolDist', 'Council', 'ZipCode'];
const DATA = [
  [1, 10, '5', '1022'], [1, 101, '1', '1001'], [1, 201, '1', '1000'], [2, 1, '9', '1025'], [2, 2, '9', '1025'], [2, 3, '9', '0001'],
  [2, 23, '9', '1025'], [3, 1, '13', '2005'], [3, 2, '9', '1020'], [3, 3, '9', '1020'], [3, 4, '319', '1000'],
];

const TableWindow = () => (
  <Window>
    <Title $h={18}><span>Table</span><MaxBox /><Space $w={4} /><CapBtn $box><Cross /></CapBtn></Title>
    <WinTools>
      <Slot $w={20}><Icon n="options" /></Slot><Caret $w={12} /><Sep $w={8} />
      <Slot $w={19}><Icon n="related" /></Slot><Caret $w={12} /><Sep $w={7} />
      <Tools names="selAttr swap clear zoomSel delBig" />
    </WinTools>
    <Title $h={20}><span>MapPLUTO</span><CapBtn><Cross /></CapBtn></Title>
    <GridFrame>
      <GridBody>
        <Sheet>
          <Row $head><Head />{COLS.map(c => <Head key={c}>{c}</Head>)}</Row>
          {DATA.map(([block, lot, ct, cb], i) => (
            <Row key={i}>
              <RowHead>{i === 0 && <svg width="5" height="7" viewBox="0 0 5 7"><path d="M0 0l4 3.500L0 7z" /></svg>}</RowHead>
              <Cell $r $focus={i === 0}>{i}</Cell><Cell $t>Polygon</Cell><Cell $t>MN</Cell><Cell $r>{block}</Cell><Cell $r>{lot}</Cell><Cell $r>101</Cell>
              <Cell>{ct}</Cell><Cell>{cb}</Cell><Cell>{i === 5 ? '' : '02'}</Cell><Cell $r>1</Cell><Cell $r>{i === 5 || i === 10 ? '' : '10004'}</Cell>
            </Row>
          ))}
          <Row><RowHead />{COLS.map(c => <Cell key={c} />)}</Row>
        </Sheet>
        <VScroll><Chevron d="M1 6l4-4 4 4" w={2} /><VThumb /><Chevron w={2} /></VScroll>
      </GridBody>
      <HScroll>
        <Slot $w={15}><svg width="7" height="9" viewBox="0 0 7 9"><path d="M5.500 1L2 4.500 5.500 8" fill="none" stroke="#555" strokeWidth="2" /></svg></Slot>
        <HThumb />
        <svg width="7" height="9" viewBox="0 0 7 9"><path d="M1.500 1L5 4.500 1.500 8" fill="none" stroke="#555" strokeWidth="2" /></svg>
      </HScroll>
    </GridFrame>
    <Nav>
      <Slot $w={24}><Icon n="first" s={14} /></Slot><Slot $w={22}><Icon n="prev" /></Slot><RecNo>1</RecNo>
      <Slot $w={24}><Icon n="next" /></Slot><Slot><Icon n="last" s={14} /></Slot><Sep $w={5} />
      <Slot $on><Icon n="allRows" /></Slot><Slot><Icon n="selRows" /></Slot><Sep $w={8} />
      <Space $w={2} />(0 out of 857374 Selected)
    </Nav>
    <TabRow><Tab><span>MapPLUTO</span></Tab></TabRow>
  </Window>
);

const MENU: [string, number][] = [['File', 34], ['Edit', 36], ['View', 41], ['Bookmarks', 75], ['Insert', 45], ['Selection', 64], ['Geoprocessing', 94], ['Customize', 72], ['Windows', 65], ['Help', 30]];

const Layer = ({ name, color, sel }: { name: string; color: string; sel?: boolean }) => (
  <>
    <Node $in={23}><Minus /><Check><svg width="9" height="8" viewBox="0 0 9 8"><path d="M1 3.500l2.500 3L8 1" fill="none" stroke="#000" strokeWidth="2" /></svg></Check><Name $sel={sel}>{name}</Name></Node>
    <Node $in={55}><Swatch $c={color} /></Node>
  </>
);

export default function App() {
  return (
    <Screen>
      <Global />
      <MenuBar>{MENU.map(([t, w]) => <MenuItem key={t} $w={w}>{t}</MenuItem>)}</MenuBar>
      <ToolRow>
        <Strip>
          <Grip /><Tools names="page open save print" /><Sep /><Tools names="cut copy paste del" /><Sep /><Tools names="undo redo" /><Sep />
          <Slot><Icon n="add" /></Slot><Caret /><Sep $w={7} /><Space $w={1} />
          <Field $w={148}>1:420,623<Chevron /></Field><Sep />
          <Slot $on><Icon n="edit" /></Slot><Sep /><Tools names="toc catalog search toolbox python" /><Sep /><Tools names="model" />
        </Strip>
        <Overflow />
      </ToolRow>
      <ToolRow>
        <Strip>
          <Grip /><Tools names="zin zout" /><Slot $on><Icon n="hand" /></Slot><Tools names="globe" /><Sep /><Tools names="shrink grow" /><Sep /><Tools names="back fwd" /><Sep />
          <Tools names="select" /><Caret /><Space $w={2} /><Tools names="clear" /><Sep /><Tools names="pointer" /><Sep $w={5} /><Tools names="info bolt html" /><Sep $w={7} />
          <Tools names="measure" /><Sep /><Tools names="find route xy" /><Sep /><Tools names="time" /><Sep /><Tools names="viewer" />
        </Strip>
        <Overflow /><Space $w={5} />
        <Strip>
          <Grip /><BarLabel $w={47}>Editor<Caret /></BarLabel><Sep /><Tools names="etool etoolA" /><Sep /><Tools names="line arc trap" /><Caret $off /><Space $w={2} />
          <Tools names="star" /><Sep /><Tools names="reshape cutpoly split cross rotate" /><Sep /><Tools names="attrs sketch" /><Sep /><Tools names="create" />
        </Strip>
        <Overflow />
      </ToolRow>
      <ToolRow $left={116}>
        <Strip>
          <Grip /><BarLabel $w={96}>Georeferencing<Caret /></BarLabel><Sep /><Space $w={1} /><Field $w={180} $off><span /><Chevron c="#999" /></Field>
          <Tools names="link linkWand linkSel linkZoom linkDel viewLink table turn" /><Caret $off /><Space $w={4} /><Blank /><Space $w={4} />
        </Strip>
        <Overflow />
      </ToolRow>
      <Main>
        <Toc>
          <TocHead><span>Table Of Contents</span><svg width="8" height="10" viewBox="0 0 8 10"><path d="M2 .5h4v5H2zM5 0v5M0 6h8M4 6v4" fill="none" stroke="#000" strokeWidth="1.200" /></svg><Cross /></TocHead>
          <TocTools><Slot $on><Icon n="listOrder" /></Slot><Tools names="listSource listVis listSel" /><Sep $w={5} /><Tools names="options" /></TocTools>
          <Tree>
            <Node><Minus /><Space $w={6} /><Icon n="layers" /><Root>Layers</Root></Node>
            <Layer name="nyc_parks" color="#dff6c0" />
            <Layer name="MapPLUTO" color="#ebf9c7" sel />
            <Layer name="water_tristate" color="#d0f1c0" />
          </Tree>
        </Toc>
        <MapFrame><CityMap /><TableWindow /></MapFrame>
      </Main>
    </Screen>
  );
}
